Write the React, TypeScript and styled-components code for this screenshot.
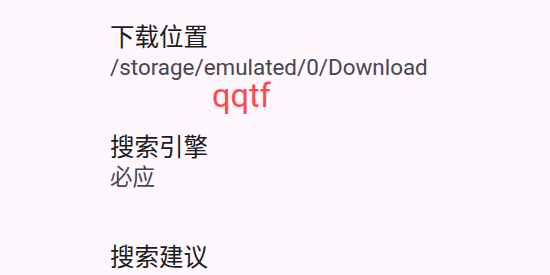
import React from "react";
import styled, { createGlobalStyle } from "styled-components";

const Global = createGlobalStyle`
  html, body { margin: 0; padding: 0; background: #FEF7FD; }
  body { width: 550px; height: 275px; overflow: hidden; font-family: Roboto, "Noto Sans CJK SC", sans-serif; }
`;

const Page = styled.div`
  display: flex;
  flex-direction: column;
  padding: 22px 0 0 110px;
  width: 550px;
  height: 275px;
  box-sizing: border-box;
  overflow: hidden;
`;

const Item = styled.div`
  display: flex;
  flex-direction: column;
  height: 110px;
  flex-shrink: 0;
`;

const Title = styled.div`
  font-family: Roboto, "Noto Sans CJK SC", sans-serif;
  font-size: 24.5px;
  line-height: 32px;
  color: #1d1b20;
`;

const Sub = styled.div`
  font-family: Roboto, "Noto Sans CJK SC", sans-serif;
  font-size: 22.4px;
  line-height: 23px;
  margin-top: 2px;
  color: #49454f;
`;

const Tag = styled.div`
  font-family: Roboto, sans-serif;
  font-size: 32.5px;
  line-height: 34px;
  color: #ff4a4a;
  margin-left: 102px;
`;

export default function App() {
  return (
    <>
      <Global />
      <Page>
        <Item>
          <Title>下载位置</Title>
          <Sub>/storage/emulated/0/Download</Sub>
          <Tag>qqtf</Tag>
        </Item>
        <Item>
          <Title>搜索引擎</Title>
          <Sub>必应</Sub>
        </Item>
        <Item>
          <Title>搜索建议</Title>
        </Item>
      </Page>
    </>
  );
}
